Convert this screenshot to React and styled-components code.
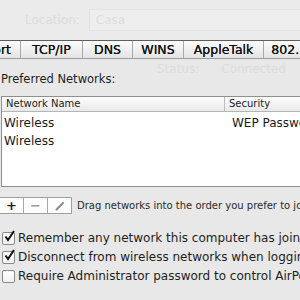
import React from 'react'
import styled, {createGlobalStyle} from 'styled-components'

const Global = createGlobalStyle`
  html, body {
    margin: 0;
    padding: 0;
    width: 300px;
    height: 300px;
    overflow: hidden;
    background: #e8e8e8;
    font-family: "DejaVu Sans", "Liberation Sans", sans-serif;
    color: #1e1e1e;
  }
`;

const tabs = [
  {label: 'AirPort', w: 21, shift: -31},
  {label: 'TCP/IP', w: 62},
  {label: 'DNS', w: 50},
  {label: 'WINS', w: 51},
  {label: 'AppleTalk', w: 80},
  {label: '802.1X', w: 60},
];

const options = [
  {text: 'Remember any network this computer has joined', on: true},
  {text: 'Disconnect from wireless networks when logging out', on: true},
  {text: 'Require Administrator password to control AirPort', on: false},
];

function App() {
  return (
    <>
      <Global />
      <Page>
        <TopStrip>
          <Faded>Location:</Faded>
          <FadedField>Casa</FadedField>
        </TopStrip>

        <TabBar>
          {tabs.map(t => (
            <Tab key={t.label} $w={t.w} $clip={t.shift !== undefined}>
              <TabLabel $shift={t.shift}>{t.label}</TabLabel>
            </Tab>
          ))}
        </TabBar>

        <StatusRow>
          <Faded>Status:</Faded>
          <Faded>Connected</Faded>
        </StatusRow>

        <SectionTitle>Preferred Networks:</SectionTitle>

        <Table>
          <HeaderRow>
            <HeadCell $w={225}>Network Name</HeadCell>
            <HeadCell>Security</HeadCell>
          </HeaderRow>
          <Rows>
            <Row>
              <Cell $w={226}>Wireless</Cell>
              <Cell>WEP Password</Cell>
            </Row>
            <Row>
              <Cell $w={226}>Wireless</Cell>
              <Cell></Cell>
            </Row>
          </Rows>
        </Table>

        <ButtonRow>
          <Buttons>
            <SmallButton>+</SmallButton>
            <SmallButton $dim>−</SmallButton>
            <SmallButton $dim>
              <svg width="10" height="10" viewBox="0 0 10 10">
                <path d="M1.5 8.5 L8 2" stroke="#8a8a8a" strokeWidth="2" strokeLinecap="round" />
              </svg>
            </SmallButton>
          </Buttons>
          <Hint>Drag networks into the order you prefer to join.</Hint>
        </ButtonRow>

        <Options>
          {options.map(o => (
            <Option key={o.text}>
              <Box>
                {o.on && (
                  <svg width="13" height="13" viewBox="0 0 13 13">
                    <path d="M2.5 6.5 L5 10 L11 1" stroke="#111" strokeWidth="2" fill="none" />
                  </svg>
                )}
              </Box>
              {o.text}
            </Option>
          ))}
        </Options>
      </Page>
    </>
  )
}

const Page = styled.div`
  width: 300px;
  height: 300px;
  overflow: hidden;
  white-space: nowrap;
`;

const TopStrip = styled.div`
  height: 40px;
  display: flex;
  align-items: center;
  gap: 9px;
  padding-left: 25px;
  box-sizing: border-box;
  background: #ebebeb;
`;

const Faded = styled.span`
  font-size: 12px;
  color: #dcdcdc;
`;

const FadedField = styled.div`
  flex: 1;
  height: 20px;
  border: 1px solid #e3e3e3;
  border-right: none;
  background: #eeeeee;
  padding-left: 6px;
  font-size: 12px;
  color: #dcdcdc;
  display: flex;
  align-items: center;
`;

const TabBar = styled.div`
  display: flex;
  height: 17px;
  border-top: 1px solid #5e5e5e;
  border-bottom: 1px solid #9c9c9c;
  background: linear-gradient(#fbfbfb, #e4e4e4);
`;

const Tab = styled.div`
  flex: none;
  width: ${p => p.$w}px;
  display: flex;
  align-items: center;
  justify-content: ${p => (p.$clip ? 'flex-start' : 'center')};
  box-sizing: border-box;
  overflow: hidden;
  border-right: 1px solid #a8a8a8;
  font-size: 12.5px;
  color: #111;
  text-shadow: 0 0 0.4px #111;
`;

const TabLabel = styled.span`
  flex: none;
  margin-left: ${p => (p.$shift ? `${p.$shift}px` : '0')};
`;

const StatusRow = styled.div`
  height: 18px;
  display: flex;
  align-items: center;
  gap: 22px;
  padding-left: 157px;
  padding-top: 2px;
  box-sizing: border-box;
`;

const SectionTitle = styled.div`
  font-size: 11.5px;
  padding-left: 1px;
  height: 16px;
  line-height: 16px;
  margin-top: -6px;
  color: #1e1e1e;
`;

const Table = styled.div`
  margin-top: 9px;
  margin-left: 1px;
  height: 91px;
  background: #fff;
  border: 1px solid #8f8f8f;
  border-right: none;
  box-sizing: border-box;
`;

const HeaderRow = styled.div`
  display: flex;
  height: 14px;
  border-bottom: 1px solid #b5b5b5;
  background: linear-gradient(#fdfdfd, #e9e9e9);
`;

const HeadCell = styled.div`
  flex: ${p => (p.$w ? 'none' : '1')};
  width: ${p => (p.$w ? `${p.$w - 2}px` : 'auto')};
  border-right: ${p => (p.$w ? '1px solid #bcbcbc' : 'none')};
  padding-left: 4px;
  box-sizing: border-box;
  font-size: 10px;
  line-height: 14px;
  color: #222;
`;

const Rows = styled.div`
  padding-top: 2px;
`;

const Row = styled.div`
  display: flex;
  height: 18px;
  align-items: center;
`;

const Cell = styled.div`
  flex: ${p => (p.$w ? 'none' : '1')};
  width: ${p => (p.$w ? `${p.$w}px` : 'auto')};
  padding-left: 2px;
  font-size: 12px;
  color: #1a1a1a;
`;

const ButtonRow = styled.div`
  display: flex;
  align-items: center;
  gap: 5px;
  margin-top: 10px;
  height: 17px;
`;

const Buttons = styled.div`
  display: flex;
  border: 1px solid #a0a0a0;
  border-left: none;
  background: #fdfdfd;
`;

const SmallButton = styled.div`
  width: 23px;
  height: 15px;
  display: flex;
  align-items: center;
  justify-content: center;
  border-right: 1px solid #a8a8a8;
  font-size: 13px;
  font-weight: bold;
  color: ${p => (p.$dim ? '#9a9a9a' : '#222')};
  &:last-child {
    border-right: none;
  }
`;

const Hint = styled.div`
  font-size: 10px;
  color: #2a2a2a;
`;

const Options = styled.div`
  display: flex;
  flex-direction: column;
  gap: 5px;
  margin-top: 17px;
  padding-left: 2px;
`;

const Option = styled.div`
  display: flex;
  align-items: center;
  gap: 3px;
  height: 14px;
  font-size: 12px;
  color: #1e1e1e;
`;

const Box = styled.div`
  width: 11px;
  height: 11px;
  flex: none;
  position: relative;
  border: 1px solid #8a8a8a;
  border-radius: 2px;
  background: linear-gradient(#fff, #f0f0f0);
  svg {
    position: absolute;
    left: 0;
    top: -3px;
  }
`;

export default App
